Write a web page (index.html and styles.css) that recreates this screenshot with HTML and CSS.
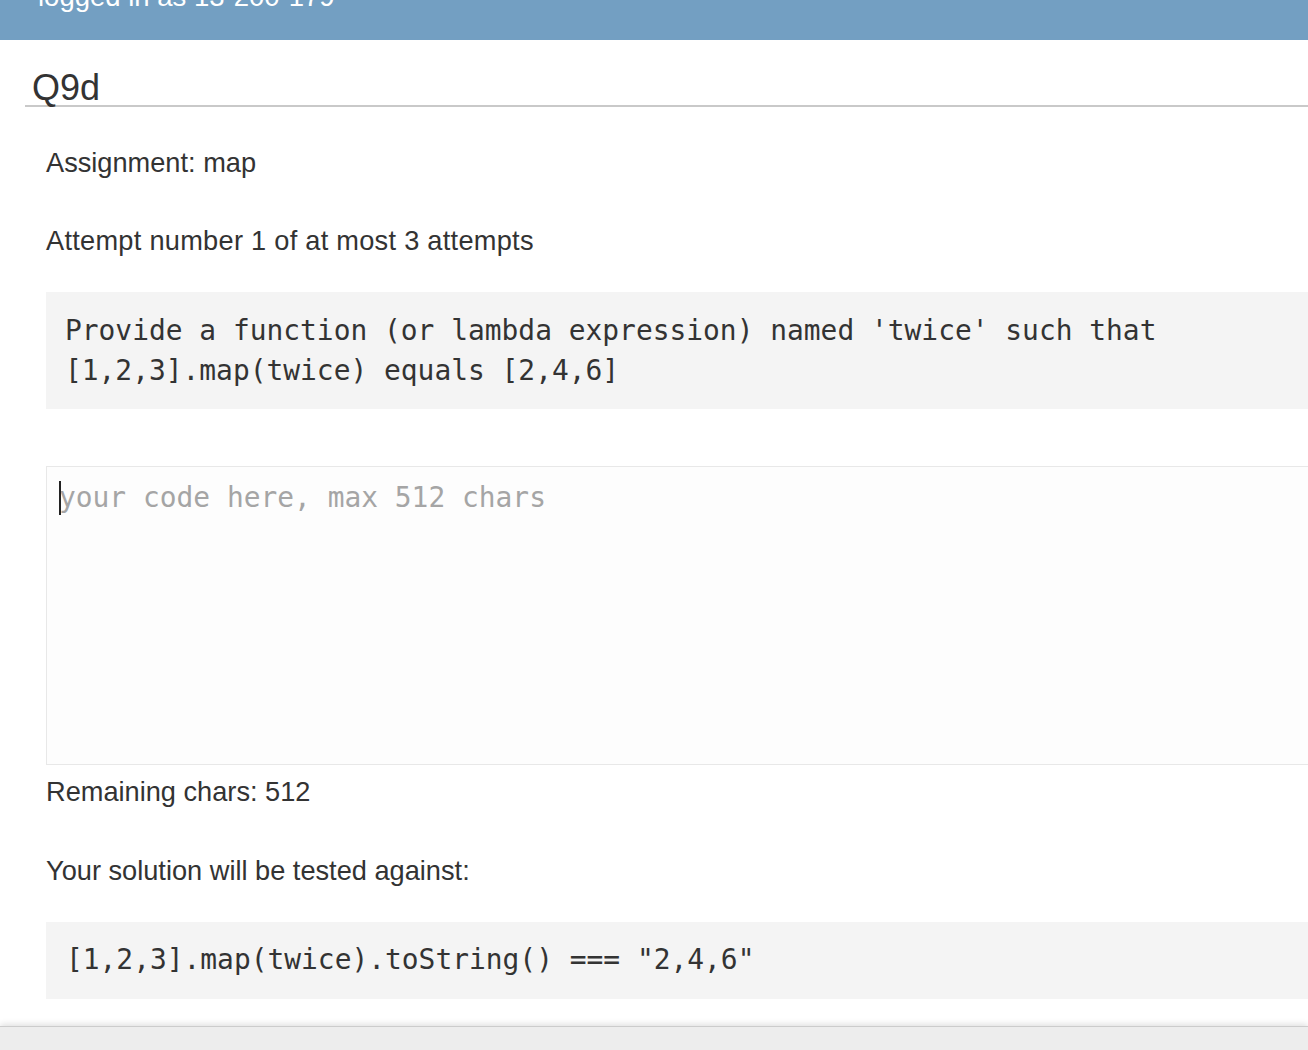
FILE: index.html
```html
<!DOCTYPE html>
<html lang="en">
<head>
<meta charset="utf-8">
<title>Q9d</title>
<link rel="stylesheet" href="styles.css">
</head>
<body>
<header class="topbar">
  <div class="login">logged in as 13-200-179</div>
</header>
<h2 class="title">Q9d</h2>
<main class="content">
  <p class="line first">Assignment: map</p>
  <p class="line attempt">Attempt number 1 of at most 3 attempts</p>
  <pre class="codebox task">Provide a function (or lambda expression) named 'twice' such that
[1,2,3].map(twice) equals [2,4,6]</pre>
  <div class="editor">
    <textarea class="code-input" placeholder="your code here, max 512 chars" maxlength="512"></textarea>
    <span class="caret"></span>
  </div>
  <p class="line remaining">Remaining chars: 512</p>
  <p class="line tested">Your solution will be tested against:</p>
  <pre class="codebox test">[1,2,3].map(twice).toString() === "2,4,6"</pre>
</main>
<footer class="bottombar"></footer>
</body>
</html>
```

FILE: styles.css
```css
html, body {
  margin: 0;
  padding: 0;
  overflow: hidden;
  background: #ffffff;
}

body {
  font-family: "Liberation Sans", Arial, Helvetica, sans-serif;
  color: #333333;
  width: 1308px;
  height: 1050px;
}

.topbar {
  height: 40px;
  background: #739fc2;
  overflow: hidden;
  padding-left: 38px;
}

.login {
  margin-top: -18px;
  font-size: 27.5px;
  line-height: 30px;
  color: #ffffff;
  white-space: nowrap;
}

.title {
  margin: 30px 0 0 25px;
  width: 1400px;
  padding: 0 0 0 7px;
  font-size: 36px;
  line-height: 35px;
  font-weight: normal;
  color: #333333;
  border-bottom: 2px solid #c9c9c9;
}

.content {
  margin-left: 46px;
  width: 1400px;
}

.line {
  margin: 42px 0 0 0;
  font-size: 27.2px;
  line-height: 36px;
  white-space: nowrap;
}

.line.first {
  margin-top: 38px;
}

.line.attempt {
  letter-spacing: 0.27px;
}

.codebox {
  margin: 33px 0 0 0;
  background: #f4f4f4;
  font-family: "DejaVu Sans Mono", "Liberation Mono", monospace;
  font-size: 27.9px;
  line-height: 40px;
  color: #333333;
  white-space: pre;
}

.codebox.task {
  padding: 19px 19px 18px 19px;
}

.codebox.test {
  padding: 18px 19px 19px 20px;
}

.editor {
  position: relative;
  margin-top: 57px;
}

.code-input {
  display: block;
  box-sizing: border-box;
  width: 100%;
  height: 299px;
  margin: 0;
  padding: 11px 12px;
  border: 1px solid #e8e8e8;
  background: #fdfdfd;
  font-family: "DejaVu Sans Mono", "Liberation Mono", monospace;
  font-size: 27.9px;
  line-height: 40px;
  color: #333333;
  resize: none;
  outline: none;
}

.code-input::placeholder {
  color: #a5a5a5;
  opacity: 1;
}

.caret {
  position: absolute;
  left: 13px;
  top: 15px;
  width: 2px;
  height: 34px;
  background: #222222;
}

.line.remaining {
  margin-top: 9px;
}

.line.tested {
  margin-top: 43px;
}

.bottombar {
  margin-top: 27px;
  height: 23px;
  background: #ededed;
  border-top: 1px solid #cccccc;
  box-shadow: 0 -2px 6px rgba(0, 0, 0, 0.12);
}
```
